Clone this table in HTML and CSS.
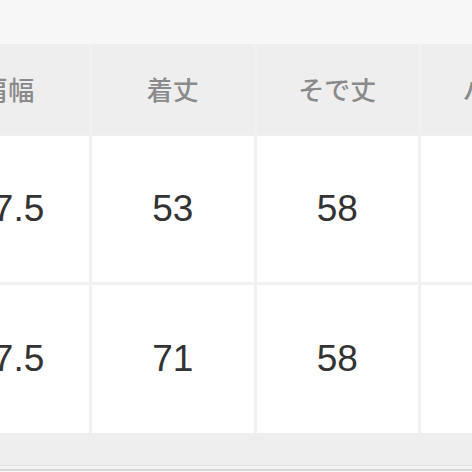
FILE: index.html
```html
<!DOCTYPE html>
<html lang="ja">
<head>
<meta charset="utf-8">
<link rel="stylesheet" href="styles.css">
</head>
<body>
<div class="page">
  <div class="top"></div>
  <div class="table">
    <div class="cell head">肩幅</div>
    <div class="cell head">着丈</div>
    <div class="cell head">そで丈</div>
    <div class="cell head">バスト</div>
    <div class="cell r1">47.5</div>
    <div class="cell r1">53</div>
    <div class="cell r1">58</div>
    <div class="cell r1">88</div>
    <div class="cell r2">47.5</div>
    <div class="cell r2">71</div>
    <div class="cell r2">58</div>
    <div class="cell r2">88</div>
  </div>
  <div class="foot"></div>
  <div class="foot-line"></div>
  <div class="foot-edge"></div>
</div>
</body>
</html>
```

FILE: styles.css
```css
html, body {
  margin: 0;
  padding: 0;
  background: #f7f7f7;
}
.page {
  width: 472px;
  height: 472px;
  overflow: hidden;
  background: #f7f7f7;
}
.top {
  height: 44px;
  background: #f7f7f7;
}
.table {
  display: grid;
  grid-template-columns: repeat(4, 161.5px);
  grid-template-rows: 91px 147px 151px;
  column-gap: 3px;
  margin-left: -72.5px;
  width: 700px;
  background: #f1f1f1;
}
.cell {
  display: flex;
  align-items: center;
  justify-content: center;
  background: #ffffff;
  font-family: "Liberation Sans", Arial, sans-serif;
  font-size: 37px;
  color: #333333;
}
.cell.r1 {
  margin-top: 1px;
}
.cell.r2 {
  margin-top: 3px;
}
.cell.head {
  background: #eeeeee;
  font-family: "Noto Sans CJK JP", "Noto Sans", sans-serif;
  font-size: 26px;
  font-weight: 500;
  color: #8a8a8a;
  padding-bottom: 2px;
}
.foot {
  height: 32px;
  background: #eeeeee;
}
.foot-line {
  height: 1px;
  background: #e2e2e2;
}
.foot-edge {
  height: 3px;
  background: #f3f3f3;
  border-bottom: 2px solid #d6d6d6;
}
```
